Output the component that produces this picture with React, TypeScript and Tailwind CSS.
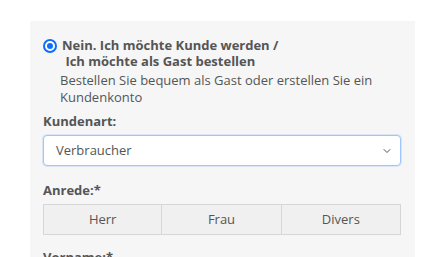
import { ChevronDown } from 'lucide-react'

const font = { fontFamily: '"Open Sans", "Liberation Sans", sans-serif' }

export default function App() {
  return (
    <div className="w-[444px] h-[257px] bg-white overflow-hidden" style={font}>
      <div className="ml-[30px] mt-[21px] w-[385px] h-[236px] bg-[#f6f6f6] px-[13px] pt-[16px]">
        {/* Radio option */}
        <label className="flex items-start gap-[5px]">
          <span className="mt-[2px] w-[14px] h-[14px] rounded-full border-[2px] border-[#0d6efd] bg-white flex items-center justify-center shrink-0">
            <span className="w-[6px] h-[6px] rounded-full bg-[#0d6efd]" />
          </span>
          <span className="text-[13px] leading-[16px] font-bold text-[#555]">
            Nein. Ich möchte Kunde werden /
            <br />
            &nbsp;Ich möchte als Gast bestellen
          </span>
        </label>
        <p className="ml-[17px] mt-[3px] text-[13px] leading-[17px] text-[#555]">
          Bestellen Sie bequem als Gast oder erstellen Sie ein
          <br />
          Kundenkonto
        </p>

        {/* Kundenart */}
        <div className="mt-[7px] text-[13px] leading-[17px] font-bold text-[#555]">Kundenart:</div>
        <div className="mt-[5px] h-[31px] w-[358px] rounded-[4px] border border-[#9ec5fe] bg-white shadow-[0_0_0_1px_rgba(13,110,253,0.12)] flex items-center justify-between pl-[12px] pr-[7px]">
          <span className="text-[13px] text-[#555]">Verbraucher</span>
          <ChevronDown size={12} strokeWidth={2} className="text-[#555]" />
        </div>

        {/* Anrede */}
        <div className="mt-[16px] text-[13px] leading-[17px] font-bold text-[#555]">Anrede:*</div>
        <div className="mt-[5px] w-[358px] h-[31px] grid grid-cols-3">
          {['Herr', 'Frau', 'Divers'].map((v, i) => (
            <button
              key={v}
              className={`h-[31px] bg-[#f0f0f0] border-[1.5px] border-[#d6d6d6] text-[13px] text-[#555] ${i > 0 ? 'border-l-0' : ''}`}
            >
              {v}
            </button>
          ))}
        </div>

        <div className="mt-[14px] text-[13px] leading-[17px] font-bold text-[#555]">Vorname:*</div>
      </div>
    </div>
  )
}
